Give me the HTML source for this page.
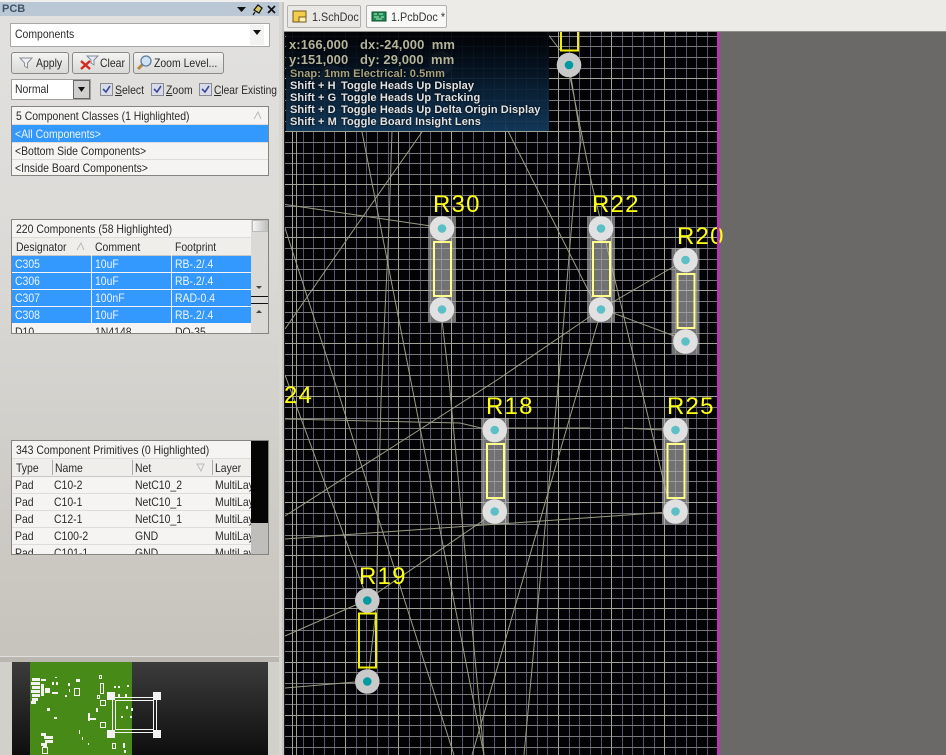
<!DOCTYPE html>
<html><head><meta charset="utf-8"><title>PCB</title>
<style>
html,body{margin:0;padding:0;background:#6b6967}
body{position:relative;width:946px;height:755px;overflow:hidden;font-family:"Liberation Sans",sans-serif;color:#222}
div{box-sizing:border-box}
.a{position:absolute}
.t{position:absolute;white-space:nowrap;font-size:12px;line-height:14px;transform:scaleX(.87);transform-origin:0 0;color:#2a2a2a}
.w{color:#eef5ff}
.btn{position:absolute;top:52px;height:22px;border:1px solid #8a8a88;border-radius:3px;background:linear-gradient(#f4f4f2,#d9d9d6)}
.list{position:absolute;left:11px;width:258px;border:1px solid #85857f;background:#f5f4f2;overflow:hidden}
.blue{position:absolute;background:#3399ff;height:16px}
.sep{position:absolute;left:0;height:1px;background:#dedcd8}
.cb{position:absolute;top:83px;width:13px;height:13px;border:1px solid #8a8a92;background:#d9dce8}
.hud{position:absolute;left:286px;top:32px;width:263px;height:99px;background:linear-gradient(rgba(2,2,4,.94),rgba(5,18,32,.93) 35%,rgba(18,58,92,.94));}
.h{position:absolute;white-space:nowrap;font-weight:bold;text-shadow:0 0 2px #000;letter-spacing:.08px}
</style></head>
<body>

<!-- Canvas -->
<svg class="a" style="left:284px;top:0" width="662" height="755" viewBox="284 0 662 755">
<rect x="284" y="0" width="662" height="755" fill="#6b6967"/>
<rect x="284" y="0" width="662" height="32" fill="#ecebe8"/>
<rect x="284" y="31" width="662" height="1" fill="#8d8d8a"/>
<rect x="285" y="32" width="432" height="723" fill="#030305"/>
<g shape-rendering="crispEdges" fill="none">
<path stroke="#55556c" stroke-width="1" d="M707.5 32V755M696.5 32V755M686.5 32V755M675.5 32V755M654.5 32V755M643.5 32V755M632.5 32V755M622.5 32V755M601.5 32V755M590.5 32V755M579.5 32V755M569.5 32V755M547.5 32V755M537.5 32V755M526.5 32V755M515.5 32V755M494.5 32V755M483.5 32V755M473.5 32V755M462.5 32V755M441.5 32V755M430.5 32V755M420.5 32V755M409.5 32V755M388.5 32V755M377.5 32V755M366.5 32V755M356.5 32V755M334.5 32V755M324.5 32V755M313.5 32V755M303.5 32V755"/>
<path stroke="#77777c" stroke-width="1" d="M285 36.5H717M285 46.5H717M285 57.5H717M285 68.5H717M285 89.5H717M285 100.5H717M285 110.5H717M285 121.5H717M285 142.5H717M285 153.5H717M285 163.5H717M285 174.5H717M285 195.5H717M285 206.5H717M285 216.5H717M285 227.5H717M285 248.5H717M285 259.5H717M285 269.5H717M285 280.5H717M285 301.5H717M285 312.5H717M285 322.5H717M285 333.5H717M285 354.5H717M285 365.5H717M285 375.5H717M285 386.5H717M285 407.5H717M285 418.5H717M285 428.5H717M285 439.5H717M285 460.5H717M285 471.5H717M285 481.5H717M285 492.5H717M285 513.5H717M285 524.5H717M285 535.5H717M285 545.5H717M285 566.5H717M285 577.5H717M285 588.5H717M285 598.5H717M285 619.5H717M285 630.5H717M285 641.5H717M285 651.5H717M285 672.5H717M285 683.5H717M285 694.5H717M285 704.5H717M285 725.5H717M285 736.5H717M285 747.5H717"/>
<path stroke="#a4a498" stroke-width="1" d="M664.5 32V755M611.5 32V755M558.5 32V755M505.5 32V755M451.5 32V755M398.5 32V755M345.5 32V755M292.5 32V755M285 78.5H717M285 131.5H717M285 184.5H717M285 237.5H717M285 290.5H717M285 343.5H717M285 396.5H717M285 449.5H717M285 502.5H717M285 555.5H717M285 608.5H717M285 662.5H717M285 715.5H717"/>
<path stroke="#a0a08c" stroke-width="1" d="M296.5 132V755"/>
</g>
<!-- ratsnest -->
<g fill="none" stroke="#9c9c84" stroke-width="1">
<path d="M285 204.5L431 226"/>
<path d="M422 132L357 225L285 329"/>
<path d="M685 260L601 309L497 380L285 516"/>
<path d="M494 511L481 522L377 593L367 600L285 636"/>
<path d="M285 539L662 512.5"/>
<path d="M367 681L285 688"/>
<path d="M285 419L460 423L481 428L590 428M624 428L663 430"/>
<path d="M284 225L339 395L454 755"/>
<path d="M362 132L410.7 380L484 755"/>
<path d="M285 375L367 598"/>
<path d="M442 320L449 380L484 755"/>
<path d="M600 315L580.7 380L472 755"/>
<path d="M571 77L581 140L575 185L560 365L524 755"/>
<path d="M569 72L592 185L667 495"/>
<path d="M505 125L592 298"/>
<path d="M613 313L677 337"/>
<path d="M392 131L389 225L387 270L385 310L381 400L376 610L368 680"/>
<path d="M547 33L560 50"/>
</g>
<!-- faint under HUD -->
<circle cx="332" cy="77" r="12" fill="#8a8a8a"/><circle cx="441" cy="63" r="12" fill="#8a8a8a"/>

<!-- highlighted components -->
<g fill="#b4b4b4" fill-opacity=".62">
<rect x="428" y="216" width="28" height="106"/>
<rect x="587" y="216" width="28" height="106"/>
<rect x="671.5" y="248" width="28" height="106"/>
<rect x="481" y="418" width="28" height="106"/>
<rect x="662" y="418" width="27" height="106"/>
</g>
<g fill="none" stroke="#ffff8c" stroke-width="2">
<rect x="434" y="242" width="17" height="54"/>
<rect x="593" y="242" width="17" height="54"/>
<rect x="677.5" y="274" width="17" height="54"/>
<rect x="487" y="444" width="17" height="54"/>
<rect x="667.5" y="444" width="17" height="54"/>
</g>
<g fill="#e1e1e1">
<circle cx="442" cy="228.5" r="12.3"/><circle cx="442" cy="309.5" r="12.3"/>
<circle cx="601" cy="228.5" r="12.3"/><circle cx="601" cy="309.5" r="12.3"/>
<circle cx="685.5" cy="260" r="12.3"/><circle cx="685.5" cy="341.5" r="12.3"/>
<circle cx="494.7" cy="430" r="12.3"/><circle cx="494.7" cy="511.5" r="12.3"/>
<circle cx="675.5" cy="430" r="12.3"/><circle cx="675.5" cy="511.5" r="12.3"/>
</g>
<g fill="#5cbfc6">
<circle cx="442" cy="228.5" r="4.3"/><circle cx="442" cy="309.5" r="4.3"/>
<circle cx="601" cy="228.5" r="4.3"/><circle cx="601" cy="309.5" r="4.3"/>
<circle cx="685.5" cy="260" r="4.3"/><circle cx="685.5" cy="341.5" r="4.3"/>
<circle cx="494.7" cy="430" r="4.3"/><circle cx="494.7" cy="511.5" r="4.3"/>
<circle cx="675.5" cy="430" r="4.3"/><circle cx="675.5" cy="511.5" r="4.3"/>
</g>
<!-- normal components -->
<g fill="none" stroke="#f2f000" stroke-width="2">
<rect x="359" y="613.5" width="17" height="54"/>
<path d="M561 32V50.5H578V32"/>
</g>
<g fill="#c9c9c9"><circle cx="367.3" cy="600.5" r="12.3"/><circle cx="367.3" cy="681.5" r="12.3"/><circle cx="569" cy="65" r="12.3"/></g>
<g fill="#009aa0"><circle cx="367.3" cy="600.5" r="4.3"/><circle cx="367.3" cy="681.5" r="4.3"/><circle cx="569" cy="65" r="4.3"/></g>
<!-- labels -->
<g fill="#ffff10" font-family="'Liberation Sans',sans-serif" font-size="24" letter-spacing="1.2">
<text x="433" y="212">R30</text><text x="592" y="212">R22</text><text x="677" y="244">R20</text>
<text x="486" y="414">R18</text><text x="667" y="414">R25</text><text x="359" y="584">R19</text>
<text x="284" y="403">24</text>
</g>
<rect x="717" y="32" width="2.5" height="723" fill="#c22cc2"/>
<rect x="284" y="32" width="1" height="723" fill="#202024"/>
</svg>

<!-- HUD -->
<div class="hud"></div>
<div class="h" style="left:289px;top:37px;font-size:13px;line-height:16px;color:#b4b49c">x:166,000</div>
<div class="h" style="left:360px;top:37px;font-size:13px;line-height:16px;color:#b4b49c">dx:-24,000&nbsp; mm</div>
<div class="h" style="left:289px;top:52px;font-size:13px;line-height:16px;color:#b4b49c">y:151,000</div>
<div class="h" style="left:360px;top:52px;font-size:13px;line-height:16px;color:#b4b49c">dy: 29,000&nbsp; mm</div>
<div class="h" style="left:290px;top:67px;font-size:11px;line-height:14px;color:#a8a17e">Snap: 1mm Electrical: 0.5mm</div>
<div class="h" style="left:290px;top:79px;font-size:11px;line-height:14px;color:#e2e2e2">Shift + H</div>
<div class="h" style="left:341px;top:79px;font-size:11px;line-height:14px;color:#e2e2e2">Toggle Heads Up Display</div>
<div class="h" style="left:290px;top:91px;font-size:11px;line-height:14px;color:#e2e2e2">Shift + G</div>
<div class="h" style="left:341px;top:91px;font-size:11px;line-height:14px;color:#e2e2e2">Toggle Heads Up Tracking</div>
<div class="h" style="left:290px;top:103px;font-size:11px;line-height:14px;color:#e2e2e2">Shift + D</div>
<div class="h" style="left:341px;top:103px;font-size:11px;line-height:14px;color:#e2e2e2">Toggle Heads Up Delta Origin Display</div>
<div class="h" style="left:290px;top:115px;font-size:11px;line-height:14px;color:#e2e2e2">Shift + M</div>
<div class="h" style="left:341px;top:115px;font-size:11px;line-height:14px;color:#e2e2e2">Toggle Board Insight Lens</div>

<!-- Tabs -->
<div class="a" style="left:287px;top:5px;width:74px;height:23px;border:1px solid #b0b0ae;border-radius:2px;background:#e9e8e5"></div>
<div class="a" style="left:366px;top:5px;width:81px;height:23px;border:1px solid #b0b0ae;border-radius:2px;background:#f8f8f6"></div>
<svg class="a" style="left:292px;top:10px" width="16" height="14"><rect x="1" y="1" width="13" height="11" fill="#f3cc4a" stroke="#6d5a20"/><rect x="7" y="7" width="7" height="5" fill="#fff3b0" stroke="#6d5a20"/></svg>
<svg class="a" style="left:371px;top:10px" width="17" height="14"><rect x="1" y="2" width="14" height="9" fill="#1f8a55" stroke="#0e4d2c"/><path d="M3 4h3M8 4h4M3 7h5M10 7h3M5 9h6" stroke="#b8f0c0"/></svg>
<div class="t" style="left:312px;top:10px;transform:scaleX(.9);color:#333">1.SchDoc</div>
<div class="t" style="left:391px;top:10px;transform:scaleX(.9);color:#333">1.PcbDoc *</div>

<!-- Left panel -->
<div class="a" style="left:0;top:0;width:280px;height:755px;background:linear-gradient(#e2e1df,#dcdbd8 30%,#c7c4bd 85%)"></div>
<div class="a" style="left:279px;top:0;width:5px;height:755px;background:#d8d6d1"></div>
<div class="a" style="left:282px;top:0;width:2px;height:755px;background:#c6c4c0"></div>
<div class="a" style="left:0;top:0;width:284px;height:2px;background:#f0efed"></div>
<div class="a" style="left:0;top:2px;width:279px;height:14px;background:#bac7d4"></div>
<div class="a" style="left:2px;top:2px;font:bold 11px/15px 'Liberation Sans',sans-serif;color:#41566b">PCB</div>
<svg class="a" style="left:234px;top:2px" width="46" height="14">
<path d="M3 5h9l-4.500 5z" fill="#111"/>
<path d="M20 8l4-5 4 3-3 5zM21 10l-2 3" fill="#d8c860" stroke="#111" stroke-width="1.200"/>
<path d="M34 4l7 7M41 4l-7 7" stroke="#111" stroke-width="1.700"/>
</svg>

<!-- Combo -->
<div class="a" style="left:10px;top:23px;width:260px;height:24px;background:#fff;border:1px solid #a8a8a6"></div>
<div class="a" style="left:250px;top:25px;width:14px;height:20px;background:#f2f2f0"></div>
<svg class="a" style="left:252px;top:30px" width="10" height="6"><path d="M1 0h8l-4 5z" fill="#111"/></svg>
<div class="t" style="left:15px;top:27px">Components</div>

<!-- Buttons -->
<div class="btn" style="left:11px;width:58px"></div>
<div class="btn" style="left:72px;width:58px"></div>
<div class="btn" style="left:133px;width:91px"></div>
<svg class="a" style="left:18px;top:56px" width="16" height="14"><path d="M2 2h12l-4.500 5v5l-3-2v-3z" fill="#eef0f2" stroke="#8b9098"/></svg>
<svg class="a" style="left:78px;top:54px" width="22" height="17"><path d="M9 2h11l-4 4v5l-3-2v-3z" fill="#e8ecf0" stroke="#7d8ca0"/><path d="M3 7l9 8M12 7l-9 8" stroke="#d6281e" stroke-width="2.400"/></svg>
<svg class="a" style="left:136px;top:54px" width="18" height="17"><path d="M7 10l-5 5" stroke="#b08a48" stroke-width="3"/><circle cx="10" cy="7" r="5" fill="#cfe3f5" stroke="#5f7fa0" stroke-width="1.300"/></svg>
<div class="t" style="left:36px;top:56px">Apply</div>
<div class="t" style="left:100px;top:56px">Clear</div>
<div class="t" style="left:154px;top:56px">Zoom Level...</div>

<!-- Normal combo + checks -->
<div class="a" style="left:11px;top:79px;width:80px;height:21px;background:#fff;border:1px solid #a0a09e"></div>
<div class="a" style="left:73px;top:80px;width:17px;height:19px;background:#cfcfcd;border:1px solid #66666a"></div>
<svg class="a" style="left:77px;top:87px" width="10" height="6"><path d="M1 0h7l-3.500 5z" fill="#111"/></svg>
<div class="t" style="left:15px;top:82px">Normal</div>

<div class="cb" style="left:100px"></div><div class="cb" style="left:151px"></div><div class="cb" style="left:199px"></div>
<svg class="a" style="left:100px;top:83px" width="112" height="13" fill="none" stroke="#3a4a9a" stroke-width="1.600"><path d="M3 6l3 3 4-6M54 6l3 3 4-6M102 6l3 3 4-6"/></svg>
<div class="t" style="left:115px;top:83px"><u>S</u>elect</div>
<div class="t" style="left:166px;top:83px"><u>Z</u>oom</div>
<div class="t" style="left:214px;top:83px;transform:scaleX(.85)"><u>C</u>lear Existing</div>

<!-- List 1 -->
<div class="list" style="top:106px;height:70px">
<div class="blue" style="left:0;top:18px;width:256px;height:17px"></div>
<div class="sep" style="top:17px;width:256px"></div>
<div class="sep" style="top:35px;width:256px"></div>
<div class="sep" style="top:52px;width:256px"></div>
<div class="t" style="left:4px;top:2px">5 Component Classes (1 Highlighted)</div>
<div class="t w" style="left:3px;top:20px">&lt;All Components&gt;</div>
<div class="t" style="left:3px;top:37px">&lt;Bottom Side Components&gt;</div>
<div class="t" style="left:3px;top:54px">&lt;Inside Board Components&gt;</div>
<svg class="a" style="left:241px;top:4px" width="10" height="9"><path d="M1 8L5 1l3 7" fill="none" stroke="#bbb"/></svg>
</div>

<!-- List 2 -->
<div class="list" style="top:219px;height:115px">
<div class="sep" style="top:17px;width:239px"></div>
<div class="sep" style="top:35px;width:239px;background:#c8c7c4"></div>
<div class="a" style="left:0;top:18px;width:239px;height:17px;background:#efeeeb"></div>
<div class="a" style="left:0;top:36px;width:239px;height:16px;background:#3399ff"></div>
<div class="a" style="left:0;top:53px;width:239px;height:16px;background:#3399ff"></div>
<div class="a" style="left:0;top:70px;width:239px;height:16px;background:#3399ff"></div>
<div class="a" style="left:0;top:87px;width:239px;height:16px;background:#3399ff"></div>
<div class="a" style="left:79px;top:18px;width:1px;height:97px;background:#e8f2fc"></div>
<div class="a" style="left:159px;top:18px;width:1px;height:97px;background:#e8f2fc"></div>
<div class="a" style="left:239px;top:0;width:18px;height:113px;background:#dad9d6"></div>
<div class="a" style="left:240px;top:0;width:17px;height:12px;background:linear-gradient(90deg,#f4f4f4,#bdbdbd);border:1px solid #bbb"></div>
<div class="a" style="left:239px;top:76px;width:18px;height:1px;background:#111"></div>
<div class="a" style="left:239px;top:83px;width:18px;height:1px;background:#111"></div>
<svg class="a" style="left:243px;top:65px" width="10" height="6"><path d="M1 1h6l-3 3z" fill="#444"/></svg>
<svg class="a" style="left:243px;top:89px" width="10" height="6"><path d="M1 4h6l-3-3z" fill="#444"/></svg>
<div class="t" style="left:4px;top:2px">220 Components (58 Highlighted)</div>
<div class="t" style="left:4px;top:20px">Designator</div><div class="t" style="left:83px;top:20px">Comment</div><div class="t" style="left:163px;top:20px">Footprint</div>
<svg class="a" style="left:64px;top:22px" width="10" height="9"><path d="M1 8L5 1l3 7" fill="none" stroke="#bbb"/></svg>
<div class="t w" style="left:3px;top:37px">C305</div><div class="t w" style="left:83px;top:37px">10uF</div><div class="t w" style="left:163px;top:37px">RB-.2/.4</div>
<div class="t w" style="left:3px;top:54px">C306</div><div class="t w" style="left:83px;top:54px">10uF</div><div class="t w" style="left:163px;top:54px">RB-.2/.4</div>
<div class="t w" style="left:3px;top:71px">C307</div><div class="t w" style="left:83px;top:71px">100nF</div><div class="t w" style="left:163px;top:71px">RAD-0.4</div>
<div class="t w" style="left:3px;top:88px">C308</div><div class="t w" style="left:83px;top:88px">10uF</div><div class="t w" style="left:163px;top:88px">RB-.2/.4</div>
<div class="t" style="left:3px;top:105px">D10</div><div class="t" style="left:83px;top:105px">1N4148</div><div class="t" style="left:163px;top:105px">DO-35</div>
</div>

<!-- List 3 -->
<div class="list" style="top:440px;height:115px">
<div class="sep" style="top:17px;width:239px"></div>
<div class="a" style="left:0;top:18px;width:239px;height:17px;background:#efeeeb"></div>
<div class="sep" style="top:35px;width:239px;background:#c8c7c4"></div>
<div class="sep" style="top:52px;width:239px"></div><div class="sep" style="top:69px;width:239px"></div><div class="sep" style="top:86px;width:239px"></div><div class="sep" style="top:103px;width:239px"></div>
<div class="a" style="left:40px;top:19px;width:1px;height:15px;background:#aaa"></div>
<div class="a" style="left:120px;top:19px;width:1px;height:15px;background:#aaa"></div>
<div class="a" style="left:200px;top:19px;width:1px;height:15px;background:#aaa"></div>
<div class="t" style="left:4px;top:2px">343 Component Primitives (0 Highlighted)</div>
<div class="t" style="left:4px;top:20px">Type</div><div class="t" style="left:43px;top:20px">Name</div><div class="t" style="left:123px;top:20px">Net</div><div class="t" style="left:203px;top:20px">Layer</div>
<svg class="a" style="left:184px;top:22px" width="10" height="9"><path d="M1 1h7L5 8z" fill="none" stroke="#bbb"/></svg>
<div class="t" style="left:3px;top:37px">Pad</div><div class="t" style="left:42px;top:37px">C10-2</div><div class="t" style="left:123px;top:37px">NetC10_2</div><div class="t" style="left:203px;top:37px">MultiLayer</div>
<div class="t" style="left:3px;top:54px">Pad</div><div class="t" style="left:42px;top:54px">C10-1</div><div class="t" style="left:123px;top:54px">NetC10_1</div><div class="t" style="left:203px;top:54px">MultiLayer</div>
<div class="t" style="left:3px;top:71px">Pad</div><div class="t" style="left:42px;top:71px">C12-1</div><div class="t" style="left:123px;top:71px">NetC10_1</div><div class="t" style="left:203px;top:71px">MultiLayer</div>
<div class="t" style="left:3px;top:88px">Pad</div><div class="t" style="left:42px;top:88px">C100-2</div><div class="t" style="left:123px;top:88px">GND</div><div class="t" style="left:203px;top:88px">MultiLayer</div>
<div class="t" style="left:3px;top:105px">Pad</div><div class="t" style="left:42px;top:105px">C101-1</div><div class="t" style="left:123px;top:105px">GND</div><div class="t" style="left:203px;top:105px">MultiLayer</div>
<div class="a" style="left:239px;top:0;width:18px;height:113px;background:#bfbeba"></div>
<div class="a" style="left:239px;top:0;width:18px;height:82px;background:#050505"></div>
</div>

<!-- Mini view -->
<div class="a" style="left:0;top:656px;width:279px;height:1px;background:#e0dfdc"></div>
<div class="a" style="left:0;top:657px;width:279px;height:98px;background:#d2d0cb"></div>
<div class="a" style="left:0;top:657px;width:279px;height:5px;background:#bab7b0"></div>
<svg class="a" style="left:12px;top:662px" width="256" height="93" viewBox="12 662 256 93">
<defs><linearGradient id="mg" x1="0" y1="0" x2="0" y2="1"><stop offset="0" stop-color="#3c3c3c"/><stop offset="1" stop-color="#0e0e0e"/></linearGradient></defs>
<rect x="12" y="662" width="256" height="93" fill="url(#mg)"/>
<rect x="30" y="662" width="102" height="93" fill="#478a18"/>
<g fill="#f2f2ee">
<rect x="32" y="678" width="8" height="3"/><rect x="31" y="682" width="9" height="3"/><rect x="32" y="686" width="8" height="3"/><rect x="31" y="690" width="9" height="3"/><rect x="32" y="694" width="8" height="3"/><rect x="32" y="698" width="6" height="3"/><rect x="31" y="701" width="5" height="3"/>
<rect x="41" y="679" width="5" height="2"/><rect x="41" y="684" width="3" height="12"/><rect x="45" y="688" width="5" height="5"/>
<rect x="52" y="682" width="2" height="3"/><rect x="56" y="682" width="2" height="3"/><rect x="52" y="692" width="6" height="2"/>
<rect x="68" y="683" width="2" height="3"/><rect x="69" y="689" width="1" height="3"/><rect x="65" y="695" width="2" height="2"/>
<rect x="76" y="679" width="4" height="3"/><rect x="55" y="677" width="2" height="1"/>
<rect x="47" y="708" width="3" height="3"/><rect x="54" y="717" width="3" height="2"/>
<rect x="88" y="713" width="2" height="8"/><rect x="88" y="718" width="8" height="2"/>
<rect x="114" y="686" width="2" height="2"/><rect x="118" y="686" width="2" height="2"/><rect x="127" y="685" width="2" height="2"/>
<rect x="126" y="706" width="2" height="3"/><rect x="131" y="708" width="2" height="3"/><rect x="121" y="716" width="2" height="2"/><rect x="130" y="716" width="2" height="2"/>
<rect x="118" y="694" width="2" height="3"/><rect x="125" y="694" width="2" height="3"/>
<rect x="96" y="708" width="2" height="4"/><rect x="79" y="730" width="1" height="4"/><rect x="82" y="737" width="1" height="3"/><rect x="88" y="743" width="1" height="2"/>
<rect x="41" y="733" width="5" height="3"/><rect x="44" y="736" width="9" height="3"/><rect x="45" y="740" width="8" height="3"/><rect x="41" y="743" width="6" height="3"/><rect x="43" y="746" width="4" height="2"/>
<rect x="123" y="743" width="2" height="5"/><rect x="124" y="750" width="2" height="3"/>
</g>
<g fill="none" stroke="#f2f2ee">
<rect x="74.500" y="688.500" width="5" height="7"/><rect x="100.500" y="683.500" width="3" height="10"/><rect x="99.500" y="675.500" width="2" height="3"/>
<rect x="100.500" y="700.500" width="5" height="5"/><rect x="100.500" y="722.500" width="5" height="5"/><rect x="97.500" y="695.500" width="2" height="3"/>
<rect x="112.500" y="743.500" width="3" height="5"/><rect x="42.500" y="747.500" width="5" height="6"/>
</g>
<g fill="none" stroke="#f4f4f4" stroke-width="1">
<rect x="112.500" y="697.500" width="44" height="35"/>
<rect x="115.500" y="700.500" width="38" height="29"/>
</g>
<g fill="#f2f2f2"><rect x="107" y="692" width="8" height="8"/><rect x="153" y="692" width="8" height="8"/><rect x="107" y="730" width="8" height="8"/><rect x="153" y="730" width="8" height="8"/></g>
</svg>

</body></html>
